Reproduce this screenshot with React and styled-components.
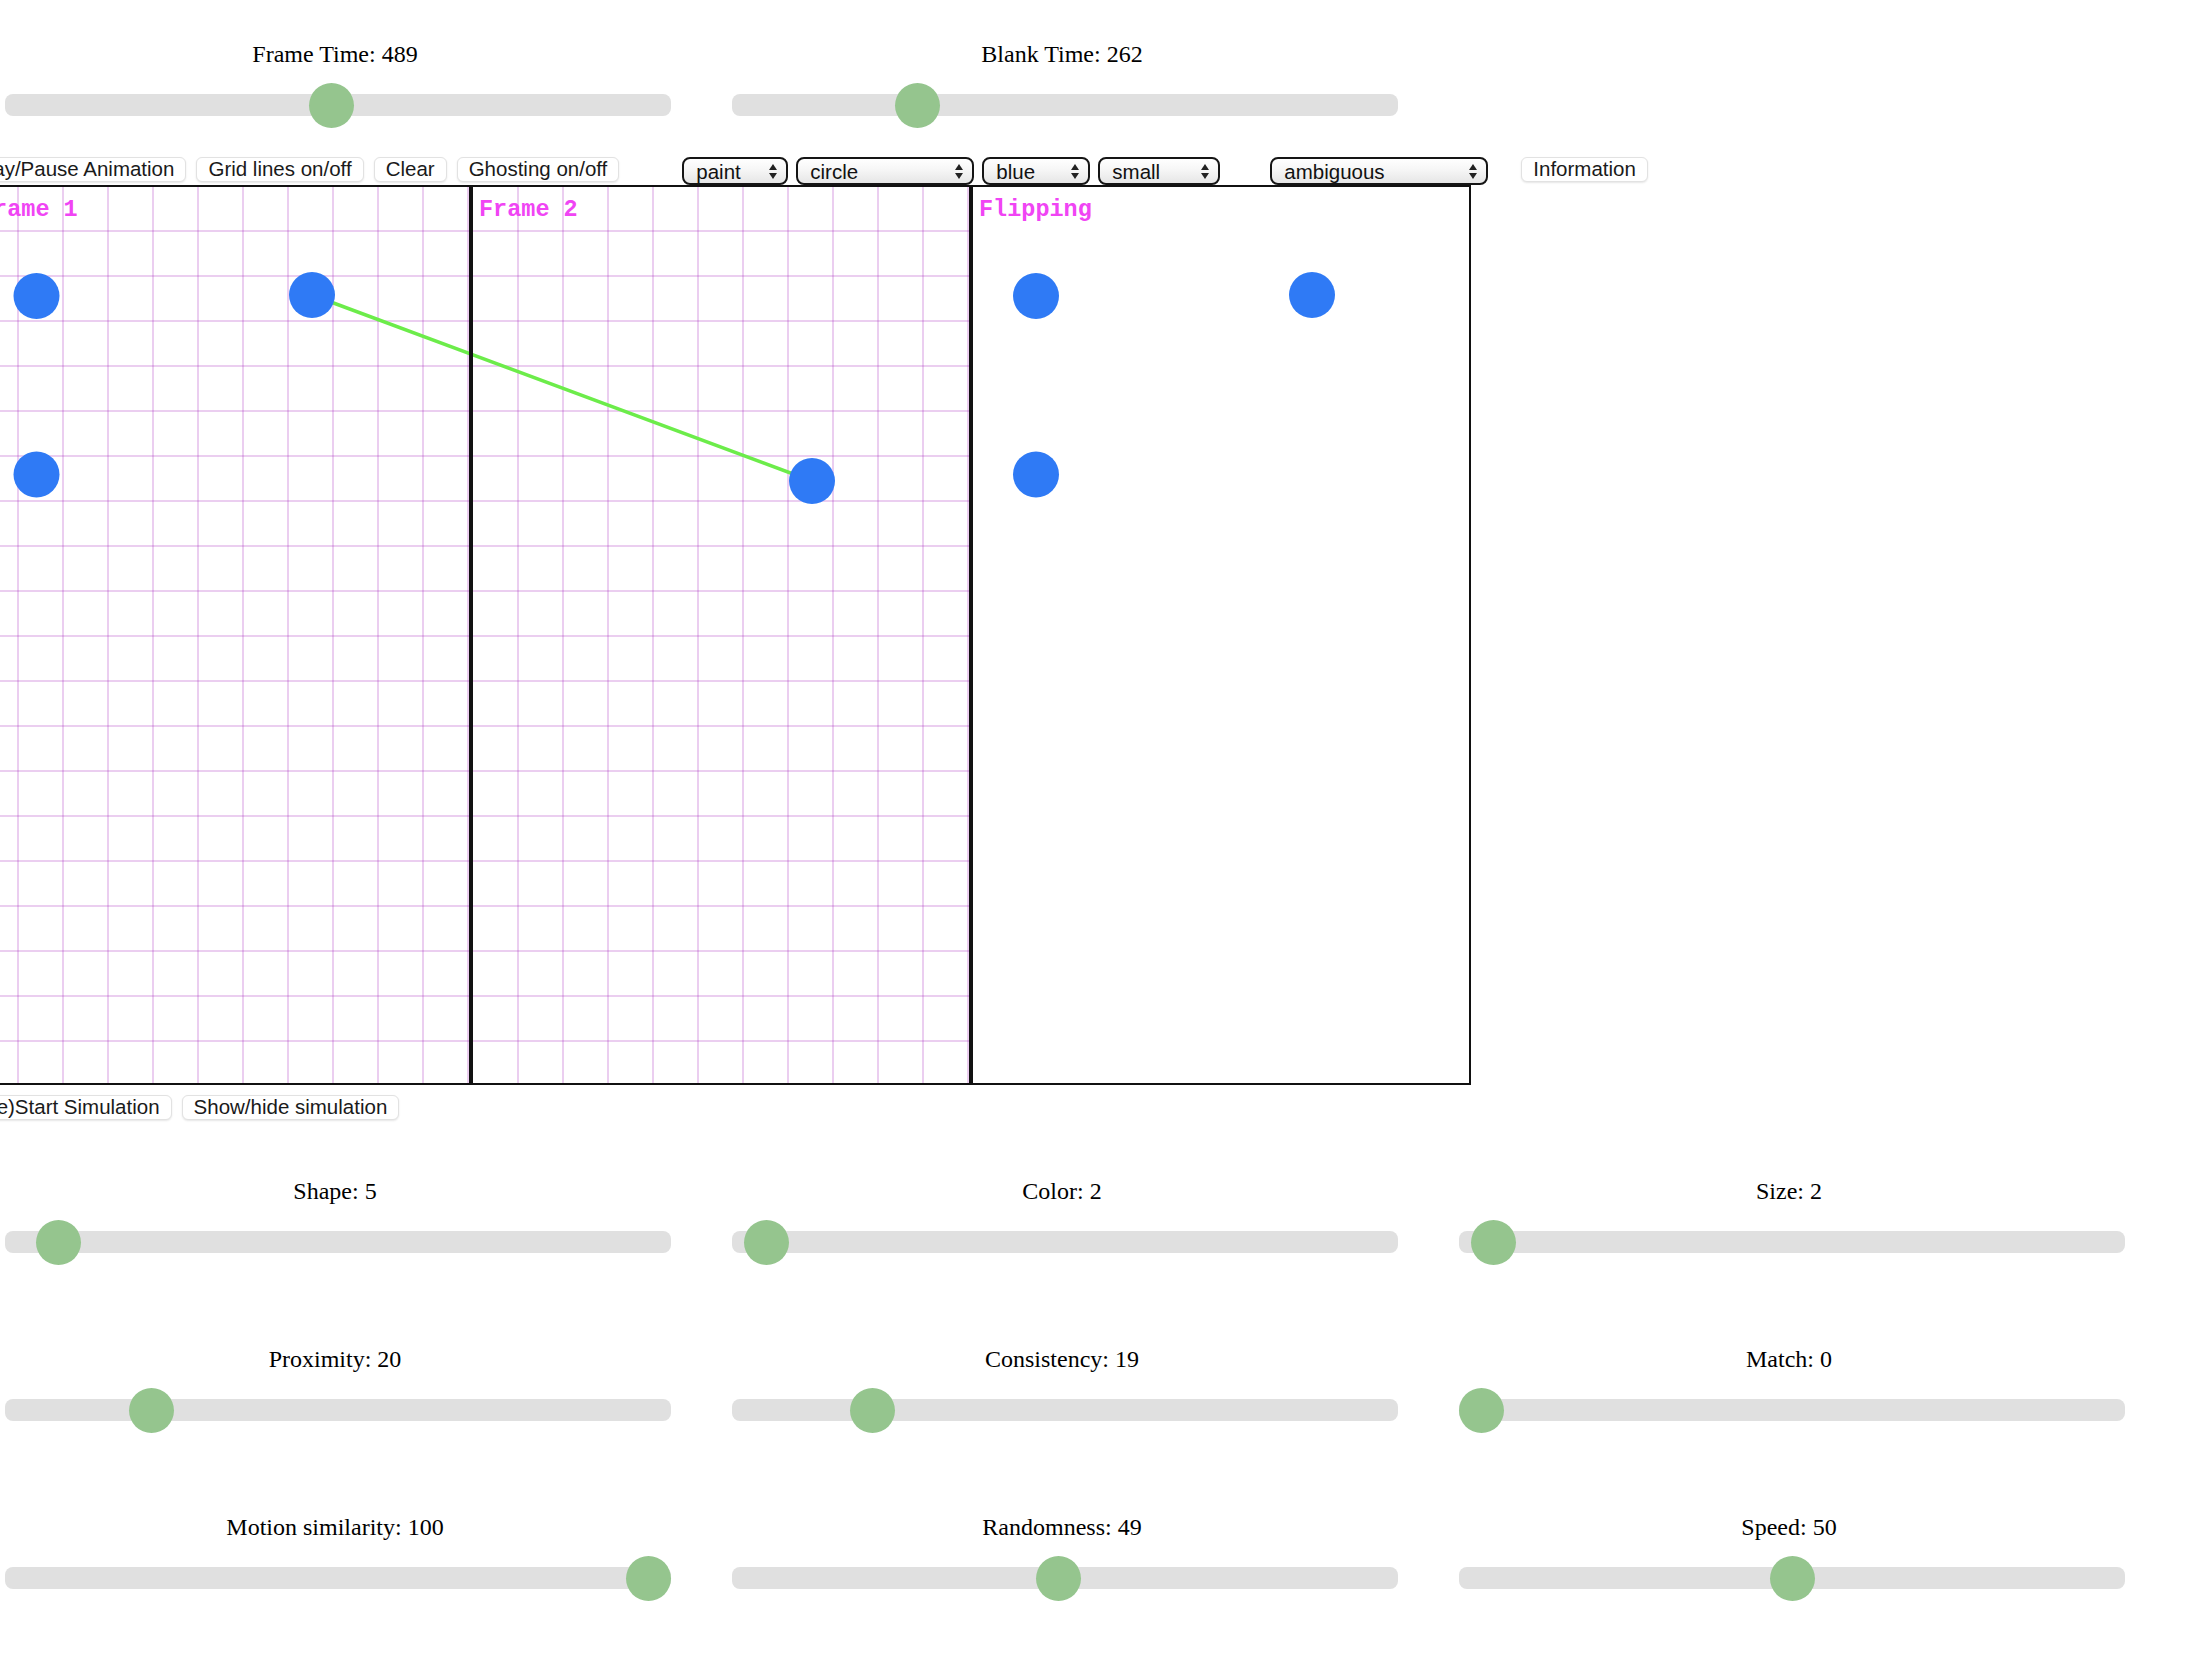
import React from "react";
import styled, { createGlobalStyle } from "styled-components";

const GlobalStyle = createGlobalStyle`
  html, body {
    margin: 0;
    padding: 0;
    background: #fff;
  }
  body {
    overflow: hidden;
    font-family: "Liberation Serif", "Times New Roman", serif;
  }
`;

const Page = styled.div`
  width: 2194px;
  min-height: 1660px;
  padding-top: 40px;
  box-sizing: border-box;
`;

// ---- sliders ----

const SliderGrid = styled.div`
  display: grid;
  grid-template-columns: repeat(3, 670px);
  column-gap: 57px;
  row-gap: 92px;
  margin-top: ${(p) => p.$top || 0}px;
`;

const SliderBlock = styled.div`
  display: flex;
  flex-direction: column;
`;

const SliderLabel = styled.div`
  font-size: 24px;
  line-height: 28px;
  text-align: center;
  color: #000;
  margin-bottom: 26px;
`;

const Slider = styled.input.attrs({ type: "range" })`
  -webkit-appearance: none;
  appearance: none;
  width: 666px;
  height: 22px;
  margin: 0 0 0 5px;
  border-radius: 8px;
  background: #e0e0e0;
  outline: none;

  &::-webkit-slider-thumb {
    -webkit-appearance: none;
    appearance: none;
    width: 45px;
    height: 45px;
    border-radius: 50%;
    background: #95c58e;
    cursor: pointer;
  }
`;

const RangeControl = ({ label, value, max = 100 }) => (
  <SliderBlock>
    <SliderLabel>
      {label}: {value}
    </SliderLabel>
    <Slider min={0} max={max} defaultValue={value} />
  </SliderBlock>
);

// ---- toolbar ----

const Workspace = styled.section`
  margin-top: 41px;
  margin-left: -37px;
`;

const Toolbar = styled.div`
  display: flex;
  align-items: flex-start;
  height: 28px;
`;

const ButtonGroup = styled.div`
  display: flex;
  gap: 10px;
  margin-left: ${(p) => p.$ml || 0}px;
`;

const Button = styled.button`
  box-sizing: border-box;
  height: 25px;
  padding: 0 11px;
  flex: none;
  font-family: "Liberation Sans", Arial, sans-serif;
  font-size: 20.5px;
  line-height: 1;
  color: #1a1a1a;
  background: #fff;
  border: 1px solid #e2e2e2;
  border-radius: 6px;
  box-shadow: 0 1px 2px rgba(0, 0, 0, 0.1);
  white-space: nowrap;
  cursor: pointer;
`;

const SelectGroup = styled.div`
  display: flex;
  gap: 8px;
  margin-left: ${(p) => p.$ml || 0}px;
`;

const SelectWrap = styled.div`
  position: relative;
  flex: none;
  width: ${(p) => p.$w}px;
  height: 28px;
`;

const NativeSelect = styled.select`
  -webkit-appearance: none;
  appearance: none;
  box-sizing: border-box;
  width: 100%;
  height: 100%;
  padding: 0 26px 0 12px;
  font-family: "Liberation Sans", Arial, sans-serif;
  font-size: 20.5px;
  color: #111;
  border: 2px solid #151515;
  border-radius: 8px;
  background: linear-gradient(#ffffff 0%, #f6f6f6 45%, #e6e6e6 100%);
  outline: none;
`;

const Arrows = styled.svg`
  position: absolute;
  right: 11px;
  top: 7px;
  width: 8px;
  height: 15px;
  pointer-events: none;
`;

const Dropdown = ({ width, options }) => (
  <SelectWrap $w={width}>
    <NativeSelect defaultValue={options[0]}>
      {options.map((o) => (
        <option key={o}>{o}</option>
      ))}
    </NativeSelect>
    <Arrows viewBox="0 0 8 15">
      <polygon points="0,6 4,0 8,6" fill="#222" />
      <polygon points="0,9 4,15 8,9" fill="#222" />
    </Arrows>
  </SelectWrap>
);

// ---- canvases ----

const CanvasRow = styled.div`
  display: flex;
  margin-left: 8px;
`;

const Canvas = styled.div`
  position: relative;
  flex: none;
  box-sizing: border-box;
  width: 500px;
  height: 900px;
  border: 2px solid #111;
  background: #fff;
  overflow: hidden;
`;

const Caption = styled.span`
  position: absolute;
  left: 6px;
  top: 11px;
  font-family: "Liberation Mono", "Courier New", monospace;
  font-weight: bold;
  font-size: 23.5px;
  line-height: 1;
  color: #f044f4;
`;

const Drawing = styled.svg`
  display: block;
  width: 496px;
  height: 896px;
`;

const DOT = "#2f7af5";
const GRID = "rgba(165, 30, 185, 0.22)";

const Sketch = ({ grid, dots, link }) => {
  const cols = Array.from({ length: 11 }, (_, i) => (i + 1) * 45);
  const rows = Array.from({ length: 19 }, (_, i) => (i + 1) * 45 - 1);
  return (
    <Drawing viewBox="0 0 496 896">
      {grid && (
        <g stroke={GRID} strokeWidth="2">
          {cols.map((x) => (
            <line key={"c" + x} x1={x} y1="0" x2={x} y2="896" />
          ))}
          {rows.map((y) => (
            <line key={"r" + y} x1="0" y1={y} x2="496" y2={y} />
          ))}
        </g>
      )}
      {link && (
        <line
          x1={link[0]}
          y1={link[1]}
          x2={link[2]}
          y2={link[3]}
          stroke="#6cec4a"
          strokeWidth="3.5"
        />
      )}
      {dots.map(([x, y]) => (
        <circle key={x + "-" + y} cx={x} cy={y} r="23" fill={DOT} />
      ))}
    </Drawing>
  );
};

const BottomBar = styled.div`
  display: flex;
  gap: 10px;
  margin-top: 10px;
`;

const App = () => {
  return (
    <>
      <GlobalStyle />
      <Page>
        <SliderGrid>
          <RangeControl label="Frame Time" value={489} max={1000} />
          <RangeControl label="Blank Time" value={262} max={1000} />
        </SliderGrid>

        <Workspace>
          <Toolbar>
            <ButtonGroup>
              <Button>Play/Pause Animation</Button>
              <Button>Grid lines on/off</Button>
              <Button>Clear</Button>
              <Button>Ghosting on/off</Button>
            </ButtonGroup>
            <SelectGroup $ml={63}>
              <Dropdown width={106} options={["paint", "erase", "move"]} />
              <Dropdown width={178} options={["circle", "square", "triangle"]} />
              <Dropdown width={108} options={["blue", "red", "green"]} />
              <Dropdown width={122} options={["small", "medium", "large"]} />
            </SelectGroup>
            <SelectGroup $ml={50}>
              <Dropdown
                width={218}
                options={["ambiguous", "element motion", "group motion"]}
              />
            </SelectGroup>
            <ButtonGroup $ml={33}>
              <Button>Information</Button>
            </ButtonGroup>
          </Toolbar>

          <CanvasRow>
            <Canvas>
              <Sketch
                grid
                dots={[
                  [63.5, 109],
                  [339, 108],
                  [63.5, 287.5],
                ]}
                link={[339, 108, 839, 294]}
              />
              <Caption>Frame 1</Caption>
            </Canvas>
            <Canvas>
              <Sketch grid dots={[[339, 294]]} link={[-161, 108, 339, 294]} />
              <Caption>Frame 2</Caption>
            </Canvas>
            <Canvas>
              <Sketch
                dots={[
                  [63, 109],
                  [339, 108],
                  [63, 287.5],
                ]}
              />
              <Caption>Flipping</Caption>
            </Canvas>
          </CanvasRow>

          <BottomBar>
            <Button>(Re)Start Simulation</Button>
            <Button>Show/hide simulation</Button>
          </BottomBar>
        </Workspace>

        <SliderGrid $top={57}>
          <RangeControl label="Shape" value={5} />
          <RangeControl label="Color" value={2} />
          <RangeControl label="Size" value={2} />
          <RangeControl label="Proximity" value={20} />
          <RangeControl label="Consistency" value={19} />
          <RangeControl label="Match" value={0} />
          <RangeControl label="Motion similarity" value={100} />
          <RangeControl label="Randomness" value={49} />
          <RangeControl label="Speed" value={50} />
        </SliderGrid>
      </Page>
    </>
  );
};

export default App;
